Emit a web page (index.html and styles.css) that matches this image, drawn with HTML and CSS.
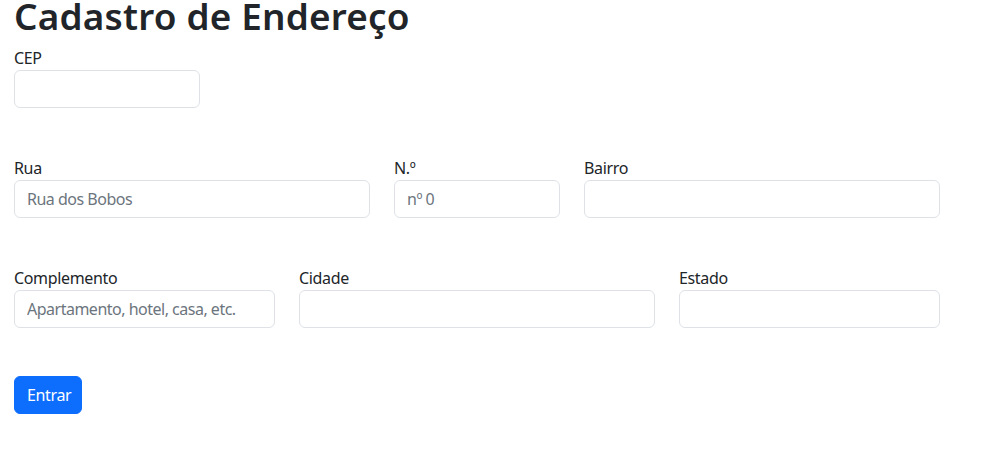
FILE: index.html
```html
<!DOCTYPE html>
<html lang="pt-BR">
<head>
<meta charset="utf-8">
<title>Cadastro de Endereço</title>
<link rel="stylesheet" href="styles.css">
</head>
<body>
<main class="page">
  <h1 class="title">Cadastro de Endereço</h1>
  <form class="form">
    <div class="row">
      <div class="field w-cep">
        <label class="label" for="cep">CEP</label>
        <input class="input" id="cep" type="text">
      </div>
    </div>
    <div class="row">
      <div class="field w-lg">
        <label class="label" for="rua">Rua</label>
        <input class="input" id="rua" type="text" placeholder="Rua dos Bobos">
      </div>
      <div class="field w-sm">
        <label class="label" for="num">N.º</label>
        <input class="input" id="num" type="text" placeholder="nº 0">
      </div>
      <div class="field w-lg">
        <label class="label" for="bairro">Bairro</label>
        <input class="input" id="bairro" type="text">
      </div>
    </div>
    <div class="row">
      <div class="field w-md">
        <label class="label" for="comp">Complemento</label>
        <input class="input" id="comp" type="text" placeholder="Apartamento, hotel, casa, etc.">
      </div>
      <div class="field w-lg">
        <label class="label" for="cidade">Cidade</label>
        <input class="input" id="cidade" type="text">
      </div>
      <div class="field w-md">
        <label class="label" for="estado">Estado</label>
        <input class="input" id="estado" type="text">
      </div>
    </div>
    <div class="actions">
      <button class="btn" type="submit">Entrar</button>
    </div>
  </form>
</main>
</body>
</html>
```

FILE: styles.css
```css
html, body {
  margin: 0;
  background: #ffffff;
}

body {
  font-family: "Noto Sans", "Open Sans", sans-serif;
  color: #212529;
  font-size: 16px;
  line-height: 1.5;
  letter-spacing: -0.35px;
}

.page {
  padding: 0 14px;
}

.title {
  font-size: 36.9px;
  font-weight: 600;
  line-height: 32px;
  letter-spacing: 0.2px;
  margin: 0 0 14px;
}

.form {
  display: flex;
  flex-direction: column;
  gap: 48px;
}

.row {
  display: flex;
  gap: 24px;
}

.field {
  display: flex;
  flex-direction: column;
}

.w-cep { width: 186px; }
.w-lg { width: 356px; }
.w-sm { width: 166px; }
.w-md { width: 261px; }

.label {
  line-height: 24px;
  margin: 0;
}

.input {
  box-sizing: border-box;
  height: 38px;
  width: 100%;
  padding: 6px 12px;
  border: 1px solid #dee2e6;
  border-radius: 6px;
  font-family: inherit;
  font-size: 16px;
  letter-spacing: -0.5px;
  color: #212529;
  background: #fff;
  outline: none;
}

.input::placeholder {
  color: #6c757d;
  opacity: 1;
}

.actions {
  display: flex;
}

.btn {
  box-sizing: border-box;
  height: 38px;
  width: 68px;
  padding: 6px 12px;
  border: 1px solid #0d6efd;
  border-radius: 6px;
  background: #0d6efd;
  color: #fff;
  font-family: inherit;
  font-size: 16px;
  letter-spacing: -0.35px;
  cursor: pointer;
}
```
